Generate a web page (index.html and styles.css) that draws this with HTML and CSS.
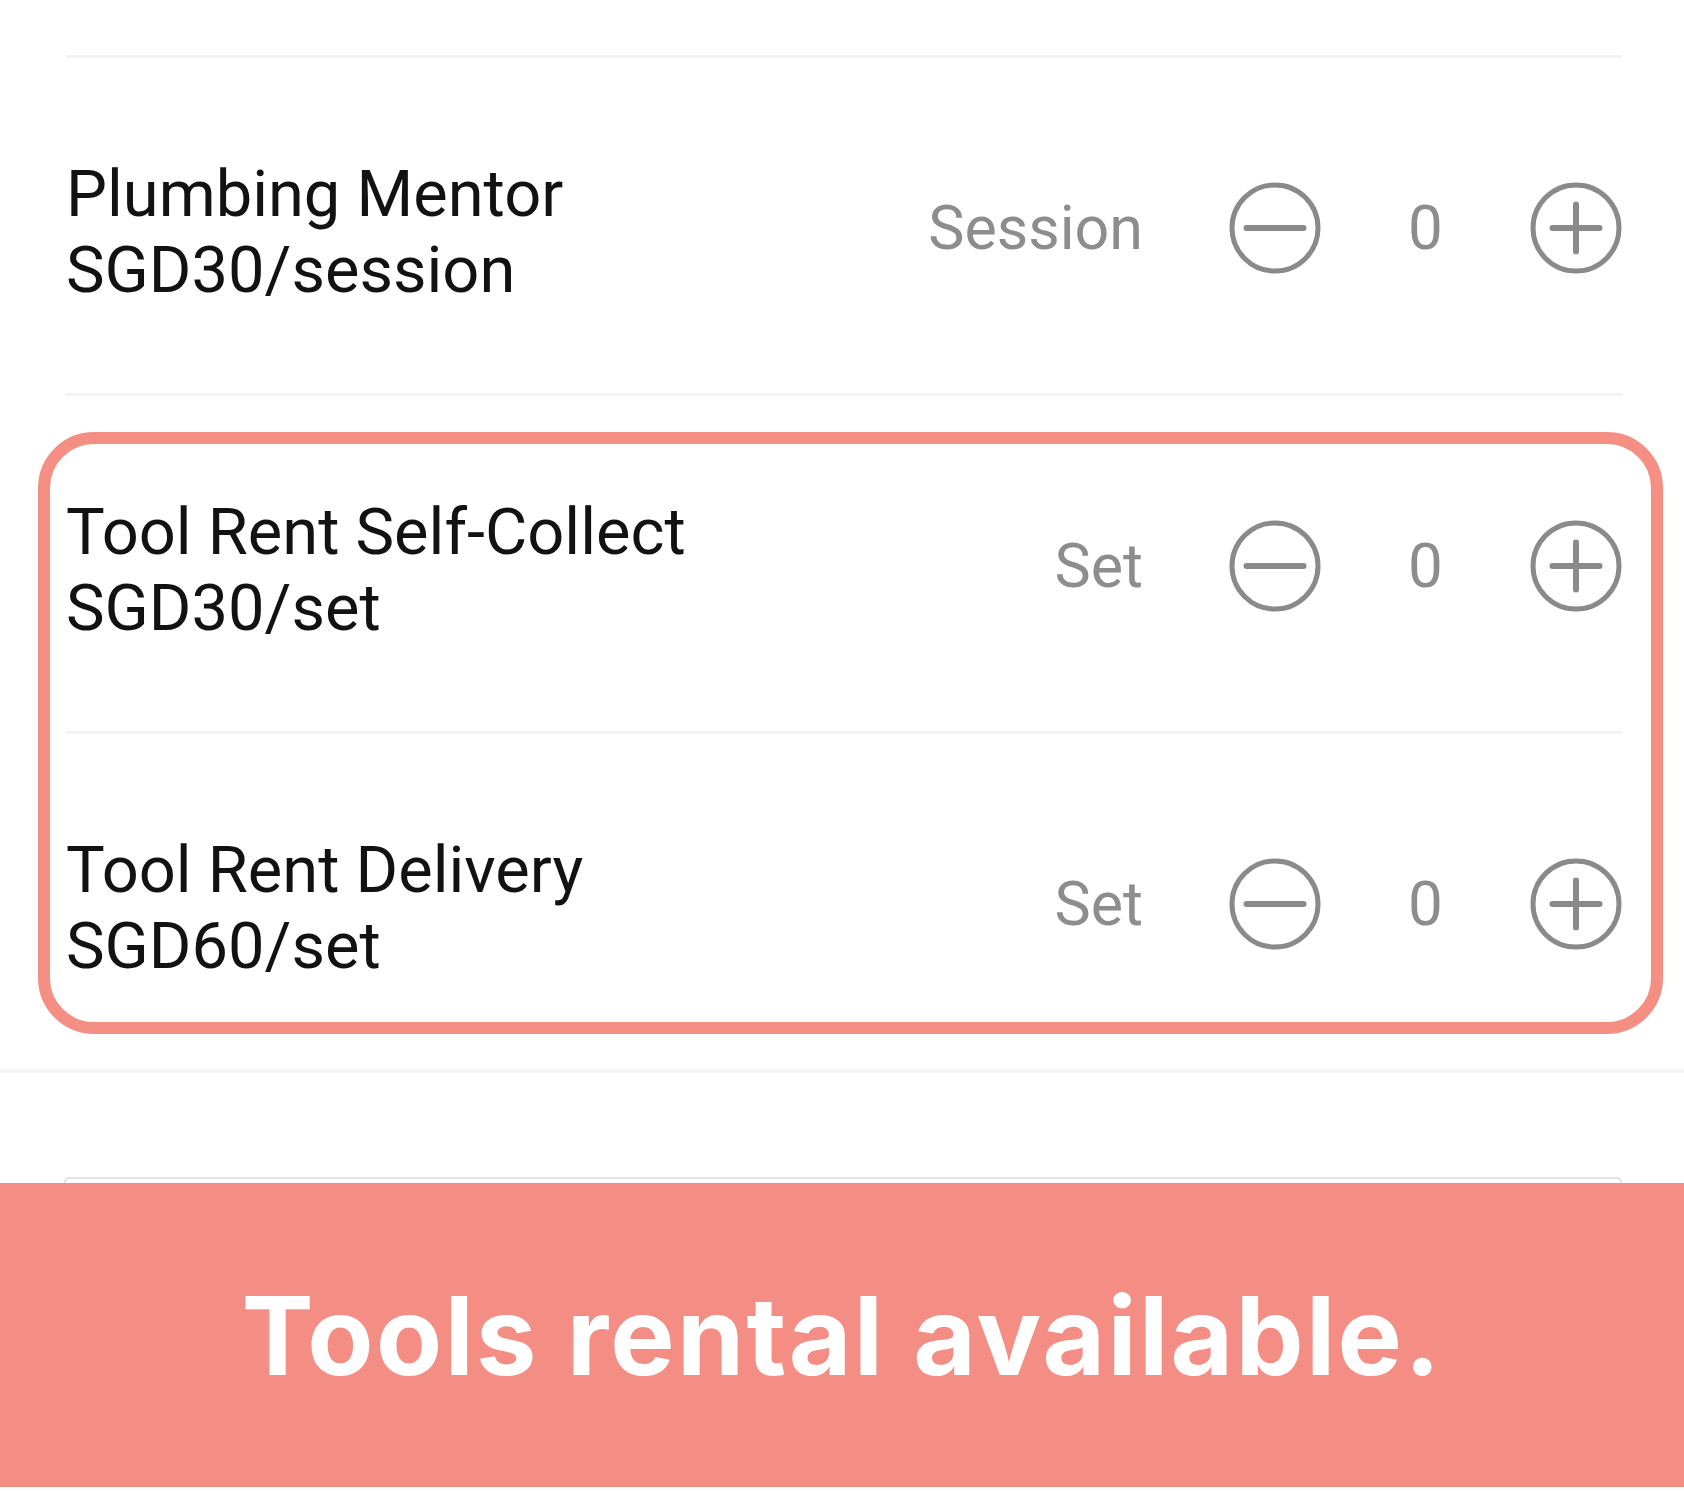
FILE: index.html
```html
<!DOCTYPE html>
<html lang="en">
<head>
<meta charset="utf-8">
<title>Tools rental</title>
<link rel="stylesheet" href="styles.css">
</head>
<body>
<div class="page">
  <div class="list">
    <div class="row">
      <div class="item-text">Plumbing Mentor<br>SGD30/session</div>
      <div class="controls">
        <span class="unit">Session</span>
        <svg class="btn" viewBox="0 0 92 92"><circle cx="46" cy="46" r="43" /><line x1="17.5" y1="46" x2="74.5" y2="46" /></svg>
        <span class="count">0</span>
        <svg class="btn" viewBox="0 0 92 92"><circle cx="46" cy="46" r="43" /><line x1="22.5" y1="46" x2="69.5" y2="46" /><line x1="46" y1="22.5" x2="46" y2="69.5" /></svg>
      </div>
    </div>
    <div class="row">
      <div class="item-text">Tool Rent Self-Collect<br>SGD30/set</div>
      <div class="controls">
        <span class="unit">Set</span>
        <svg class="btn" viewBox="0 0 92 92"><circle cx="46" cy="46" r="43" /><line x1="17.5" y1="46" x2="74.5" y2="46" /></svg>
        <span class="count">0</span>
        <svg class="btn" viewBox="0 0 92 92"><circle cx="46" cy="46" r="43" /><line x1="22.5" y1="46" x2="69.5" y2="46" /><line x1="46" y1="22.5" x2="46" y2="69.5" /></svg>
      </div>
    </div>
    <div class="row">
      <div class="item-text">Tool Rent Delivery<br>SGD60/set</div>
      <div class="controls">
        <span class="unit">Set</span>
        <svg class="btn" viewBox="0 0 92 92"><circle cx="46" cy="46" r="43" /><line x1="17.5" y1="46" x2="74.5" y2="46" /></svg>
        <span class="count">0</span>
        <svg class="btn" viewBox="0 0 92 92"><circle cx="46" cy="46" r="43" /><line x1="22.5" y1="46" x2="69.5" y2="46" /><line x1="46" y1="22.5" x2="46" y2="69.5" /></svg>
      </div>
    </div>
    <div class="highlight"></div>
  </div>
  <div class="section-divider"></div>
  <div class="spacer"></div>
  <div class="card-peek"></div>
  <div class="banner">Tools rental available.</div>
</div>
</body>
</html>
```

FILE: styles.css
```css
* { box-sizing: border-box; }
html, body { margin: 0; padding: 0; background: #ffffff; }
.page {
  width: 1684px;
  height: 1491px;
  overflow: hidden;
  font-family: Roboto, "Liberation Sans", sans-serif;
}
.list {
  position: relative;
  padding-top: 55px;
}
.row {
  height: 338px;
  margin: 0 62px 0 66px;
  border-top: 3px solid #f3f3f3;
  display: flex;
  align-items: center;
  justify-content: space-between;
}
.item-text {
  font-size: 65px;
  line-height: 76px;
  color: #121212;
  margin-top: 12px;
}
.controls {
  display: flex;
  align-items: center;
  margin-top: 4px;
}
.unit {
  font-size: 61px;
  color: #8d8d8d;
  margin-right: 86px;
}
.count {
  width: 209px;
  text-align: center;
  font-size: 62px;
  color: #8d8d8d;
}
.btn {
  width: 92px;
  height: 92px;
  display: block;
  fill: none;
  stroke: #8a8a8a;
  stroke-width: 5;
}
.btn line { stroke-width: 6; stroke-linecap: round; }
.highlight {
  position: absolute;
  left: 38px;
  top: 432px;
  width: 1625px;
  height: 602px;
  border: 12px solid #f58f84;
  border-radius: 56px;
  pointer-events: none;
}
.section-divider {
  height: 4px;
  background: #f4f5f7;
}
.spacer { height: 104px; }
.card-peek {
  height: 6px;
  margin: 0 62px 0 64px;
  border: 2px solid #e3e5e5;
  border-bottom: none;
  border-radius: 5px 5px 0 0;
}
.banner {
  height: 304px;
  background: #f48e84;
  color: #ffffff;
  font-family: Inter, "Noto Sans", sans-serif;
  font-weight: 700;
  font-size: 108px;
  letter-spacing: 2.3px;
  display: flex;
  align-items: center;
  justify-content: center;
}
```
